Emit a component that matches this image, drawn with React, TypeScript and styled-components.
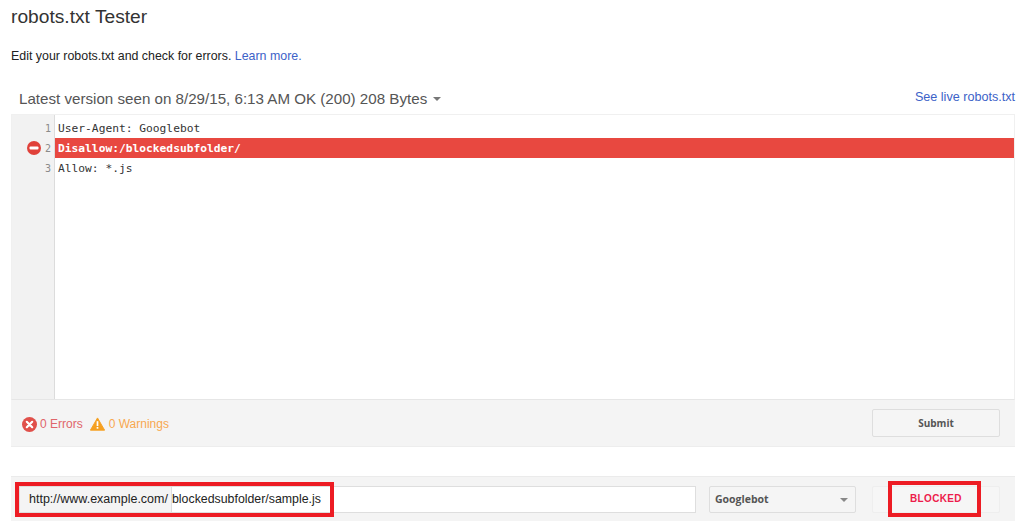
import React from "react";
import styled, { createGlobalStyle } from "styled-components";

const Global = createGlobalStyle`
  html, body { margin: 0; padding: 0; background: #fff; overflow: hidden; }
  body { font-family: "Liberation Sans", Arial, sans-serif; color: #333; }
  * { box-sizing: border-box; }
`;

const Page = styled.div`
  width: 1024px;
  height: 521px;
  overflow: hidden;
  padding: 7px 9px 0 11px;
  display: flex;
  flex-direction: column;
  & > * { flex: none; }
`;

const Title = styled.h1`
  margin: 0;
  font-size: 19.2px;
  font-weight: 400;
  line-height: 20px;
  color: #333;
`;

const Intro = styled.p`
  margin: 21px 0 0;
  font-size: 12.4px;
  line-height: 16px;
  color: #222;
`;

const Link = styled.a`
  color: #3c62c8;
  text-decoration: none;
`;

const VersionRow = styled.div`
  display: flex;
  align-items: center;
  justify-content: space-between;
  margin-top: 24px;
  height: 20px;
  padding-left: 8px;
`;

const Version = styled.div`
  display: flex;
  align-items: center;
  gap: 6px;
  font-size: 15.15px;
  color: #555;
`;

const Caret = styled.span`
  width: 0;
  height: 0;
  margin-top: 1px;
  border-left: 4px solid transparent;
  border-right: 4px solid transparent;
  border-top: 4px solid #777;
`;

const LiveLink = styled(Link)`
  font-size: 12.6px;
  margin-bottom: 3px;
`;

const Editor = styled.div`
  margin-top: 6px;
  height: 286px;
  display: flex;
  border: 1px solid #f0f0f0;
  border-bottom-color: #e6e6e6;
`;

const Gutter = styled.div`
  width: 43px;
  flex: none;
  padding-top: 3px;
  background: #f2f2f2;
  border-right: 1px solid #dcdcdc;
`;

const LineNo = styled.div`
  position: relative;
  height: 20px;
  padding-right: 3px;
  text-align: right;
  font-family: "DejaVu Sans Mono", monospace;
  font-size: 10px;
  line-height: 22px;
  color: #8a8a8a;
`;

const ErrorMark = styled.svg`
  position: absolute;
  left: 15px;
  top: 3px;
`;

const Code = styled.div`
  flex: 1;
  padding-top: 3px;
`;

const CodeLine = styled.div<{ $error?: boolean }>`
  height: 20px;
  padding-left: 3px;
  font-family: "DejaVu Sans Mono", monospace;
  font-size: 11.25px;
  line-height: 22px;
  white-space: pre;
  color: ${(p) => (p.$error ? "#fff" : "#333")};
  background: ${(p) => (p.$error ? "#e84840" : "transparent")};
  font-weight: ${(p) => (p.$error ? 700 : 400)};
`;

const Footer = styled.div`
  height: 47px;
  display: flex;
  align-items: center;
  justify-content: space-between;
  padding: 0 15px 0 11px;
  background: #f4f4f4;
  border-bottom: 1px solid #ededed;
`;

const Status = styled.div`
  display: flex;
  align-items: center;
  gap: 7px;
  padding-top: 2px;
  font-size: 12px;
`;

const StatusItem = styled.span<{ $color: string }>`
  display: flex;
  align-items: center;
  gap: ${(p) => (p.$color === "#f8a850" ? 4 : 3)}px;
  color: ${(p) => p.$color};
`;

const SubmitButton = styled.button`
  width: 128px;
  height: 28px;
  padding: 0;
  background: #f5f5f5;
  border: 1px solid #dedede;
  border-radius: 2px;
  font-family: "Open Sans", "DejaVu Sans", sans-serif;
  font-size: 10px;
  font-weight: 700;
  color: #555;
`;

const TestBar = styled.div`
  margin-top: 29px;
  height: 45px;
  display: flex;
  align-items: center;
  padding: 0 15px 0 8px;
  background: #f4f4f4;
  border-top: 1px solid #ebebeb;
`;

const UrlGroup = styled.div`
  position: relative;
  display: flex;
  align-items: center;
  width: 677px;
  height: 27px;
  border: 1px solid #dedede;
  background: #fff;
`;

const UrlPrefix = styled.span`
  flex: none;
  width: 152px;
  height: 100%;
  padding-left: 9px;
  background: #f4f4f4;
  border-right: 1px solid #dedede;
  font-size: 12.5px;
  line-height: 25px;
  color: #222;
  white-space: nowrap;
`;

const UrlPath = styled.span`
  font-size: 12.35px;
  line-height: 25px;
  color: #222;
`;

const Highlight = styled.div`
  position: absolute;
  border: 4px solid #ed1c24;
  pointer-events: none;
`;

const UrlHighlight = styled(Highlight)`
  left: -5px;
  top: -5px;
  width: 319px;
  height: 35px;
`;

const AgentSelect = styled.div`
  margin-left: 13px;
  width: 147px;
  height: 27px;
  display: flex;
  align-items: center;
  justify-content: space-between;
  padding: 0 7px 0 5px;
  background: #f5f5f5;
  border: 1px solid #dedede;
  border-radius: 2px;
  font-family: "Open Sans", "DejaVu Sans", sans-serif;
  font-size: 10.5px;
  font-weight: 700;
  color: #555;
`;

const SelectCaret = styled(Caret)`
  border-top-color: #888;
`;

const ResultBox = styled.div`
  position: relative;
  margin-left: 16px;
  width: 128px;
  height: 27px;
  display: flex;
  align-items: center;
  justify-content: center;
  padding-bottom: 2px;
  background: #f6f6f6;
  border: 1px solid #eeeeee;
  border-radius: 2px;
  font-size: 10px;
  font-weight: 700;
  letter-spacing: 0.35px;
  color: #ed1c4c;
`;

const ResultHighlight = styled(Highlight)`
  left: 15px;
  top: -6px;
  width: 93px;
  height: 36px;
`;

const ErrorCircle = () => (
  <svg width="15" height="15" viewBox="0 0 15 15">
    <circle cx="7.5" cy="7.5" r="7.5" fill="#e0504a" />
    <path d="M4.8 4.8l5.4 5.4M10.2 4.8l-5.4 5.4" stroke="#fff" strokeWidth="2.2" strokeLinecap="round" />
  </svg>
);

const WarnTriangle = () => (
  <svg width="15" height="14" viewBox="0 0 16 14">
    <path d="M8 0.5L15.6 13.6H0.4z" fill="#f5a020" stroke="#f5a020" strokeLinejoin="round" />
    <rect x="7.1" y="4" width="1.8" height="5.2" fill="#fff" />
    <rect x="7.1" y="10.2" width="1.8" height="1.8" fill="#fff" />
  </svg>
);

const lines = ["User-Agent: Googlebot", "Disallow:/blockedsubfolder/", "Allow: *.js"];

export default function App() {
  return (
    <>
      <Global />
      <Page>
        <Title>robots.txt Tester</Title>
        <Intro>
          Edit your robots.txt and check for errors. <Link href="#">Learn more.</Link>
        </Intro>
        <VersionRow>
          <Version>
            Latest version seen on 8/29/15, 6:13 AM OK (200) 208 Bytes
            <Caret />
          </Version>
          <LiveLink href="#">See live robots.txt</LiveLink>
        </VersionRow>
        <Editor>
          <Gutter>
            {lines.map((_, i) => (
              <LineNo key={i}>
                {i === 1 && (
                  <ErrorMark width="14" height="14" viewBox="0 0 14 14">
                    <circle cx="7" cy="7" r="7" fill="#e0413a" />
                    <rect x="2.5" y="5.5" width="9" height="3" rx="1" fill="#fff" />
                  </ErrorMark>
                )}
                {i + 1}
              </LineNo>
            ))}
          </Gutter>
          <Code>
            {lines.map((l, i) => (
              <CodeLine key={i} $error={i === 1}>
                {l}
              </CodeLine>
            ))}
          </Code>
        </Editor>
        <Footer>
          <Status>
            <StatusItem $color="#e0656a">
              <ErrorCircle />0 Errors
            </StatusItem>
            <StatusItem $color="#f8a850">
              <WarnTriangle />0 Warnings
            </StatusItem>
          </Status>
          <SubmitButton>Submit</SubmitButton>
        </Footer>
        <TestBar>
          <UrlGroup>
            <UrlPrefix>http://www.example.com/</UrlPrefix>
            <UrlPath>blockedsubfolder/sample.js</UrlPath>
            <UrlHighlight />
          </UrlGroup>
          <AgentSelect>
            Googlebot
            <SelectCaret />
          </AgentSelect>
          <ResultBox>
            BLOCKED
            <ResultHighlight />
          </ResultBox>
        </TestBar>
      </Page>
    </>
  );
}
